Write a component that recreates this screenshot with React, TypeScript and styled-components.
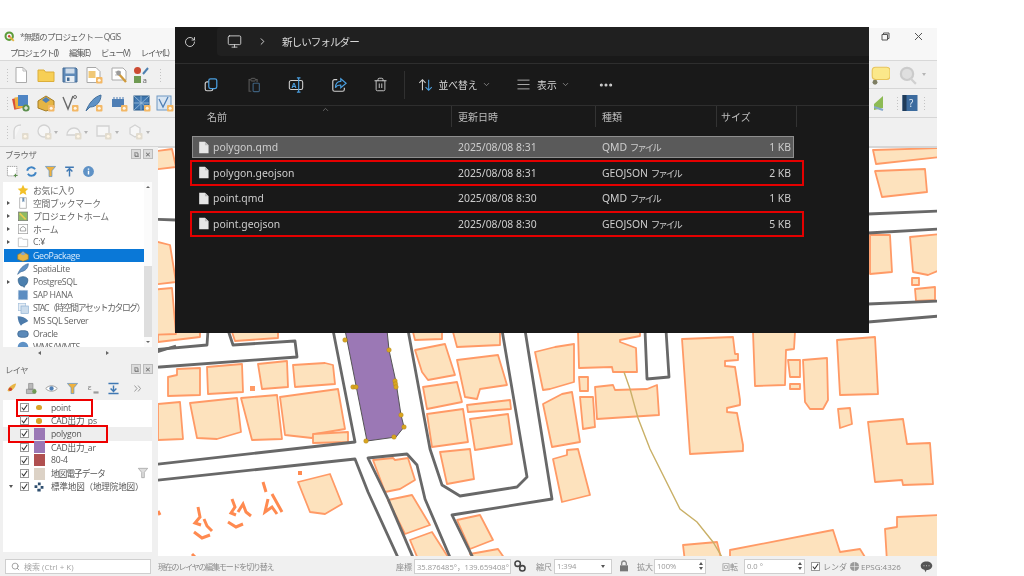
import React from 'react';
import styled, { createGlobalStyle } from 'styled-components';
import { AlignJustify, ChevronDown, ChevronRight, ChevronUp, Monitor, MoreHorizontal, RotateCw, Search, Trash2 } from 'lucide-react';

const UI_FONT = '"Open Sans", "Noto Sans CJK JP", sans-serif';
const FILE_FONT = '"Noto Sans", "Noto Sans CJK JP", sans-serif';

const GlobalStyle = createGlobalStyle`
    html, body {
        margin: 0;
        padding: 0;
        background: #ffffff;
    }
`;

const Page = styled.div`
    position: relative;
    width: 1024px;
    height: 576px;
    overflow: hidden;
    background: #ffffff;
    font-family: ${UI_FONT};
`;

const QgisWindow = styled.div`
    display: flex;
    flex-direction: column;
    width: 937px;
    height: 548px;
    margin-top: 28px;
    background: #f0f0f0;
    color: #555;
    filter: blur(0.5px);
`;

const TitleBar = styled.div`
    display: flex;
    align-items: center;
    height: 16px;
    padding: 0 14px 0 4px;
    flex-shrink: 0;
    background: #f7f7f7;
    font-size: 8.5px;
    color: #666;
`;

const TitleText = styled.span`
    margin-left: 5px;
    letter-spacing: -0.8px;
    white-space: nowrap;
`;

const WindowButtons = styled.div`
    display: flex;
    gap: 24px;
    margin-left: auto;
`;

const MenuBar = styled.div`
    display: flex;
    align-items: center;
    height: 16px;
    padding-left: 10px;
    flex-shrink: 0;
    gap: 11px;
    background: #f7f7f7;
    border-bottom: 1px solid #d8d8d8;
    font-size: 8.3px;
    letter-spacing: -1px;
    color: #555;
    white-space: nowrap;
`;

const ToolRow = styled.div<{ $h: number }>`
    display: flex;
    align-items: center;
    height: ${(p) => p.$h}px;
    flex-shrink: 0;
    box-sizing: border-box;
    padding-left: 6px;
    border-bottom: 1px solid #d6d6d6;
    background: #f0f0f0;
`;

const Grip = styled.span<{ $ml?: number }>`
    width: 3px;
    height: 14px;
    margin-left: ${(p) => p.$ml ?? 0}px;
    flex-shrink: 0;
    background-image: radial-gradient(#c4c4c4 0.7px, transparent 0.8px);
    background-size: 3px 3px;
`;

const Tool = styled.span<{ $w?: number }>`
    display: flex;
    align-items: center;
    justify-content: center;
    width: ${(p) => p.$w ?? 24.4}px;
    flex-shrink: 0;
`;

const Caret = styled.span<{ $color?: string }>`
    width: 0;
    height: 0;
    margin: 0 4px 0 -1px;
    flex-shrink: 0;
    border-left: 2.5px solid transparent;
    border-right: 2.5px solid transparent;
    border-top: 3px solid ${(p) => p.$color ?? '#b5b5b5'};
`;

const RightTools = styled.div`
    display: flex;
    align-items: center;
    margin-left: auto;
`;

const Main = styled.div`
    display: flex;
    flex: 1;
    min-height: 0;
`;

const SidePanel = styled.div`
    display: flex;
    flex-direction: column;
    width: 158px;
    flex-shrink: 0;
`;

const DockTitle = styled.div`
    display: flex;
    align-items: center;
    justify-content: space-between;
    height: 14px;
    padding: 0 5px 0 5px;
    flex-shrink: 0;
    font-size: 8.3px;
    letter-spacing: -0.5px;
    color: #666;
`;

const DockButtons = styled.div`
    display: flex;
    gap: 2px;
`;

const DockButton = styled.span`
    display: flex;
    align-items: center;
    justify-content: center;
    width: 8px;
    height: 8px;
    background: #dcdcdc;
    border: 1px solid #bbb;
    color: #666;
    font-size: 7px;
    line-height: 1;
`;

const DockTools = styled.div<{ $h: number }>`
    display: flex;
    align-items: center;
    gap: 2px;
    height: ${(p) => p.$h}px;
    padding-left: 4px;
    flex-shrink: 0;
`;

const TreeBox = styled.div<{ $h: number; $clip?: boolean }>`
    position: relative;
    height: ${(p) => p.$h}px;
    margin: 0 6px 0 3px;
    flex-shrink: 0;
    overflow: ${(p) => (p.$clip ? 'hidden' : 'visible')};
    background: #ffffff;
`;

const BrowserList = styled.div`
    padding: 1.5px 8px 0 1px;
`;

const BrowserRow = styled.div<{ $selected?: boolean; $tight?: boolean }>`
    display: flex;
    align-items: center;
    height: 13.1px;
    background: ${(p) => (p.$selected ? '#0a78d7' : 'transparent')};
    color: ${(p) => (p.$selected ? '#dcecfb' : '#666')};
    font-size: 8.8px;
    letter-spacing: ${(p) => (p.$tight ? '-1.4px' : '-0.35px')};
    white-space: nowrap;
    overflow: hidden;
`;

const Arrow = styled.span`
    width: 0;
    height: 0;
    margin-left: 3px;
    flex-shrink: 0;
    border-top: 2.5px solid transparent;
    border-bottom: 2.5px solid transparent;
    border-left: 3px solid #555;
`;

const ArrowSlot = styled.span`
    display: flex;
    width: 11px;
    flex-shrink: 0;
`;

const RowIcon = styled.span`
    display: flex;
    justify-content: center;
    width: 15px;
    margin-right: 3px;
    flex-shrink: 0;
`;

const VScroll = styled.div`
    position: absolute;
    top: 0;
    right: 0;
    bottom: 11px;
    width: 8px;
    display: flex;
    flex-direction: column;
    background: #fbfbfb;
    color: #777;
`;

const VThumb = styled.div`
    flex: 1;
    margin-top: 74px;
    background: #dedede;
`;

const ScrollArrow = styled.span<{ $dir: 'up' | 'down' | 'left' | 'right' }>`
    width: 0;
    height: 0;
    margin: 4px auto;
    flex-shrink: 0;
    border-style: solid;
    border-color: transparent;
    border-width: ${(p) => (p.$dir === 'up' || p.$dir === 'down' ? '2.5px 2.5px' : '2.5px 3px')};
    ${(p) => (p.$dir === 'up' ? 'border-bottom-color: #666; border-top-width: 0;' : '')}
    ${(p) => (p.$dir === 'down' ? 'border-top-color: #666; border-bottom-width: 0;' : '')}
    ${(p) => (p.$dir === 'left' ? 'border-right-color: #666; border-left-width: 0;' : '')}
    ${(p) => (p.$dir === 'right' ? 'border-left-color: #666; border-right-width: 0;' : '')}
`;

const HScroll = styled.div`
    position: absolute;
    left: 0;
    right: 0;
    bottom: 0;
    height: 11px;
    display: flex;
    align-items: center;
    justify-content: space-between;
    padding: 0 10px 0 2px;
    background: #f0f0f0;
`;

const DockGap = styled.div`
    height: 4px;
    flex-shrink: 0;
`;

const LayerList = styled.div`
    padding-top: 1px;
`;

const LayerRow = styled.div<{ $active?: boolean; $markLeft?: number; $markWidth?: number; $tight?: boolean }>`
    position: relative;
    display: flex;
    align-items: center;
    height: 13.2px;
    padding-left: 17px;
    background: ${(p) => (p.$active ? '#eeeeee' : 'transparent')};
    font-size: 8.6px;
    letter-spacing: ${(p) => (p.$tight ? '-0.9px' : '-0.2px')};
    color: #555;
    white-space: nowrap;
    ${(p) =>
        p.$markWidth
            ? `&::after {
        content: '';
        position: absolute;
        top: -2px;
        left: ${p.$markLeft}px;
        width: ${p.$markWidth}px;
        height: 18px;
        box-sizing: border-box;
        border: 2px solid #ee0000;
    }`
            : ''}
`;

const ExpandMark = styled.span`
    position: absolute;
    left: 6px;
    top: 5px;
    width: 0;
    height: 0;
    border-left: 2.5px solid transparent;
    border-right: 2.5px solid transparent;
    border-top: 3px solid #555;
`;

const CheckBox = styled.span`
    display: flex;
    align-items: center;
    justify-content: center;
    box-sizing: border-box;
    width: 9px;
    height: 9px;
    flex-shrink: 0;
    background: #ffffff;
    border: 1px solid #9a9a9a;
`;

const SymbolSlot = styled.span`
    display: flex;
    align-items: center;
    justify-content: center;
    width: 12px;
    height: 12px;
    margin: 0 6px 0 4px;
    flex-shrink: 0;
`;

const PointSymbol = styled.span`
    width: 5.5px;
    height: 5.5px;
    border-radius: 50%;
    background: #d8a42a;
`;

const FillSymbol = styled.span<{ $color: string }>`
    width: 11px;
    height: 12px;
    background: ${(p) => p.$color};
`;

const FilterBadge = styled.span`
    position: absolute;
    right: 3px;
    top: 0;
    display: flex;
`;

const MapCanvas = styled.div`
    flex: 1;
    min-width: 0;
    background: #ffffff;
    border-top: 1px solid #d6d6d6;
    overflow: hidden;
`;

const MapSvg = styled.svg`
    display: block;
    width: 779px;
    height: 409px;
    filter: blur(0.35px);
`;

const StatusBar = styled.div`
    display: flex;
    align-items: center;
    height: 20px;
    padding-left: 5px;
    flex-shrink: 0;
    background: #f0f0f0;
    font-size: 8px;
    color: #8a8a8a;
    white-space: nowrap;
`;

const SearchBox = styled.div`
    display: flex;
    align-items: center;
    gap: 4px;
    box-sizing: border-box;
    width: 146px;
    height: 15px;
    padding-left: 5px;
    background: #ffffff;
    border: 1px solid #cfcfcf;
    color: #a5a5a5;
`;

const StatusText = styled.span<{ $ml?: number; $w?: number; $tight?: boolean }>`
    display: flex;
    align-items: center;
    flex-shrink: 0;
    margin-left: ${(p) => p.$ml ?? 0}px;
    ${(p) => (p.$w ? `width: ${p.$w}px;` : '')}
    ${(p) => (p.$tight ? 'letter-spacing: -1.2px;' : '')}
`;

const StatusInput = styled.span<{ $w: number; $ml: number }>`
    display: flex;
    align-items: center;
    justify-content: space-between;
    box-sizing: border-box;
    width: ${(p) => p.$w}px;
    height: 15px;
    margin-left: ${(p) => p.$ml}px;
    padding: 0 2px;
    flex-shrink: 0;
    background: #ffffff;
    border: 1px solid #cfcfcf;
    font-size: 7.6px;
    color: #999;
`;

const SpinButtons = styled.span`
    display: flex;
    flex-direction: column;
    gap: 1.5px;
`;

const SpinUp = styled.span`
    width: 0;
    height: 0;
    border-left: 2.5px solid transparent;
    border-right: 2.5px solid transparent;
    border-bottom: 3px solid #555;
`;

const SpinDown = styled(SpinUp)`
    border-bottom: 0;
    border-top: 3px solid #555;
`;

const Explorer = styled.div`
    position: absolute;
    left: 175px;
    top: 27px;
    display: flex;
    flex-direction: column;
    width: 694px;
    height: 306px;
    background: #191919;
    color: #d0d0d0;
    font-family: ${FILE_FONT};
    filter: blur(0.35px);
`;

const AddressBar = styled.div`
    display: flex;
    align-items: stretch;
    height: 36px;
    flex-shrink: 0;
    border-bottom: 1px solid #2e2e2e;
`;

const RefreshSlot = styled.div`
    display: flex;
    align-items: center;
    justify-content: center;
    width: 30px;
    margin-right: 12px;
    padding-bottom: 6px;
    color: #d8d8d8;
`;

const PathField = styled.div`
    display: flex;
    align-items: center;
    flex: 1;
    height: 29px;
    padding-left: 10px;
    background: #202020;
    border-radius: 4px 0 0 4px;
    font-size: 10.6px;
    letter-spacing: -1px;
    color: #d8d8d8;
`;

const PathChevron = styled.span`
    display: flex;
    margin: 0 14px 0 15px;
    color: #dddddd;
`;

const CommandBar = styled.div`
    display: flex;
    align-items: center;
    height: 41px;
    flex-shrink: 0;
    padding-left: 15px;
    border-bottom: 1px solid #2e2e2e;
`;

const CommandButton = styled.span<{ $w?: number }>`
    display: flex;
    align-items: center;
    justify-content: center;
    width: ${(p) => p.$w ?? 42.6}px;
    flex-shrink: 0;
    color: #d6d6d6;
`;

const CommandDivider = styled.span`
    width: 1px;
    height: 28px;
    margin: 0 13px 0 3px;
    background: #303030;
`;

const CommandLabel = styled.span<{ $mr?: number }>`
    display: flex;
    align-items: center;
    gap: 4px;
    margin-right: ${(p) => p.$mr ?? 0}px;
    font-size: 9.8px;
    color: #d8d8d8;
    white-space: nowrap;
`;

const HeaderRow = styled.div`
    position: relative;
    display: grid;
    grid-template-columns: 277px 144px 121px 80px;
    height: 25px;
    flex-shrink: 0;
    font-size: 10px;
    color: #bdbdbd;
`;

const HeaderCell = styled.div<{ $pad: number }>`
    display: flex;
    align-items: center;
    height: 21px;
    padding-left: ${(p) => p.$pad}px;
    border-right: 1px solid #333;
`;

const SortMark = styled.span`
    position: absolute;
    left: 146px;
    top: -1px;
    display: flex;
    color: #777;
`;

const FileList = styled.div`
    display: flex;
    flex-direction: column;
    padding: 5px 0 0 17px;
`;

const FileRow = styled.div<{ $selected?: boolean; $marked?: boolean }>`
    position: relative;
    display: grid;
    grid-template-columns: 16px 245px 144px 115px 74px;
    align-items: center;
    box-sizing: border-box;
    width: 602px;
    height: 22px;
    margin-bottom: 3.5px;
    padding-left: 5px;
    background: ${(p) => (p.$selected ? '#5a5a5a' : 'transparent')};
    ${(p) => (p.$selected ? 'outline: 1px solid #8e8e8e; outline-offset: -1px;' : '')}
    font-size: 10.4px;
    color: #cdcdcd;
    ${(p) =>
        p.$marked
            ? `&::after {
        content: '';
        position: absolute;
        left: -2px;
        right: -10px;
        top: -2px;
        bottom: -2px;
        border: 2px solid #e40000;
    }`
            : ''}
`;

const SizeCell = styled.span`
    text-align: right;
`;

const KanaPart = styled.span`
    font-size: 9.5px;
    letter-spacing: -2px;
`;

const Svg = styled.svg.attrs({ viewBox: '0 0 18 18', fill: 'none' })<{ $s?: number }>`
    display: block;
    flex-shrink: 0;
    width: ${(p) => p.$s ?? 18}px;
    height: ${(p) => p.$s ?? 18}px;
`;

const Badge = ({ x = 11, y = 11, pale }: { x?: number; y?: number; pale?: boolean }) => (
    <g>
        <rect x={x} y={y} width="6.5" height="6.5" rx="1" fill={pale ? '#e2dccf' : '#f3b866'} />
        <circle cx={x + 3.2} cy={y + 3.2} r="1.5" fill="#fff6e6" />
    </g>
);

const NewFile = () => (
    <Svg><path d="M4 1.5h7l3.5 3.5v11.5H4z" fill="#fff" stroke="#aaa" /><path d="M11 1.5V5h3.5" stroke="#bbb" /></Svg>
);
const OpenFolder = () => (
    <Svg><path d="M1 4h6l1.5 2H17v9.5H1z" fill="#f7cf55" stroke="#dcae3a" /></Svg>
);
const SaveDisk = () => (
    <Svg><path d="M2 2h13l1 1v13H2z" fill="#5f8ab8" stroke="#446b94" /><rect x="4.5" y="2.5" width="9" height="5" fill="#cfdcea" /><rect x="4.5" y="10" width="9" height="6" fill="#e8eef4" /><rect x="6" y="11.5" width="2.5" height="3.5" fill="#446b94" /></Svg>
);
const ProjectDoc = () => (
    <Svg><path d="M2 1.5h9l4 4v11H2z" fill="#fff" stroke="#a8a8a8" /><rect x="3.5" y="5" width="7" height="7" fill="#f0c877" /><Badge /></Svg>
);
const WrenchDoc = () => (
    <Svg><path d="M2 2h11l3 3v9H2z" fill="#fff" stroke="#aaa" /><path d="M5 6h6M5 9h4" stroke="#bbb" /><path d="M8 7l8 9" stroke="#d09b3c" strokeWidth="2.4" /><circle cx="8.5" cy="7" r="2.4" fill="#9a9a9a" /></Svg>
);
const DataManager = () => (
    <Svg><circle cx="5.5" cy="4.5" r="3.5" fill="#cc4a32" /><rect x="2" y="10" width="7" height="7" fill="#6f9a52" /><path d="M11 8l5-6" stroke="#4d7fb0" strokeWidth="2" /><text x="10.5" y="16.5" fontSize="8" fontFamily="Open Sans" fill="#666">a</text></Svg>
);
const LayerAdd = () => (
    <Svg><rect x="1" y="4" width="9" height="11" fill="#d94f38" transform="rotate(-12 5 9)" /><rect x="3" y="3" width="10" height="11" fill="#eeb13f" transform="rotate(-6 8 8)" /><rect x="6" y="1" width="10" height="11" fill="#4f85c4" /><circle cx="14" cy="14" r="3.6" fill="#5d8f4e" /><path d="M14 12v4M12 14h4" stroke="#fff" /></Svg>
);
const BoxLayer = () => (
    <Svg><path d="M1 7l8-5 8 5v7l-8 3-8-3z" fill="#e5b545" stroke="#a47d25" /><path d="M5 6l4-3 4 3-4 3z" fill="#4f7fb5" /><Badge /></Svg>
);
const VectorLayer = () => (
    <Svg><path d="M2 3l5 12 5-13" stroke="#6a6a6a" strokeWidth="1.4" /><circle cx="14" cy="3" r="1.5" stroke="#6a6a6a" /><Badge /></Svg>
);
const Feather = () => (
    <Svg><path d="M1 17C4 9 9 3 16 1c0 6-4 12-11 12z" fill="#5f92c6" stroke="#44709c" /><Badge /></Svg>
);
const ChipLayer = () => (
    <Svg><rect x="2" y="5" width="12" height="8" fill="#4f7fb5" /><path d="M4 3v2M7 3v2M10 3v2M13 3v2" stroke="#4f7fb5" /><Badge /></Svg>
);
const MeshLayer = () => (
    <Svg><rect x="1" y="2" width="15" height="14" fill="#3f76ae" stroke="#2a5a88" /><path d="M1 2l15 14M16 2L1 16M8 2v14M1 9h15" stroke="#9fc0dd" strokeWidth=".8" /><Badge /></Svg>
);
const WmsLayer = () => (
    <Svg><rect x="1" y="2" width="14" height="14" fill="#d8e5f2" stroke="#6f98c2" /><path d="M3 5l4 8 5-10" stroke="#4f7fb5" strokeWidth="1.3" /><Badge /></Svg>
);
const GreyShape = ({ d }: { d: string }) => (
    <Svg><path d={d} stroke="#d2d2d2" strokeWidth="1.3" fill="#f6f6f6" /><Badge x={10} y={10} pale /></Svg>
);
const Bubble = () => (
    <Svg $s={20}><rect x="2" y="2" width="16" height="11" rx="3" fill="#fbe88a" stroke="#e8c45a" /><circle cx="4.5" cy="15.5" r="2.2" fill="#7d7d62" /></Svg>
);
const GreyGear = () => (
    <Svg $s={20}><circle cx="9" cy="8" r="5.5" fill="#dfdfdf" stroke="#cbcbcb" strokeWidth="2" /><path d="M12 12l5 5" stroke="#d0d0d0" strokeWidth="2" /></Svg>
);
const GreenStack = () => (
    <Svg><path d="M0 10l9-8v12l-9 2z" fill="#8dbb55" /><path d="M0 13l9 3" stroke="#86a8cc" strokeWidth="2" /></Svg>
);
const HelpBook = () => (
    <Svg><rect x="1.5" y="1" width="15" height="16" fill="#3c6b9e" /><rect x="1.5" y="1" width="4" height="16" fill="#1f3b59" /><text x="8" y="13" fontSize="10" fontFamily="Open Sans" fill="#e8f0f8">?</text></Svg>
);

const RestoreGlyph = () => (
    <Svg $s={9}><path d="M2 5h11v11H2z" stroke="#555" strokeWidth="2" /><path d="M5 5V2h11v11h-3" stroke="#555" strokeWidth="2" /></Svg>
);
const CloseGlyph = () => (
    <Svg $s={9}><path d="M2 2l14 14M16 2L2 16" stroke="#555" strokeWidth="2" /></Svg>
);
const QgisLogo = () => (
    <Svg $s={11}><circle cx="8.5" cy="8.5" r="6" stroke="#5d9c3a" strokeWidth="3.4" /><path d="M10 10l6 6" stroke="#e2b23c" strokeWidth="3" /><circle cx="8.5" cy="8.5" r="2" fill="#c94a35" /></Svg>
);

const Small = ({ children }: { children: React.ReactNode }) => (
    <Svg $s={12}>{children}</Svg>
);

const browserIcons: Record<string, React.ReactNode> = {
    star: <Small><path d="M9 1l2.4 5.4 5.6.6-4.2 3.8 1.2 5.7L9 13.6 4 16.5l1.2-5.7L1 7l5.6-.6z" fill="#f2c029" /></Small>,
    bookmark: <Small><path d="M4 1h10v16H4z" fill="#fff" stroke="#999" /><path d="M8 1v7l1.5-1.5L11 8V1" fill="#6b8fb3" /></Small>,
    home: <Small><rect x="2" y="3" width="14" height="13" fill="#8fbb63" stroke="#777" /><path d="M4 5l9 9" stroke="#e7cb53" strokeWidth="2.5" /></Small>,
    house: <Small><rect x="2" y="2" width="14" height="14" fill="#fff" stroke="#999" /><path d="M5 12V8l4-3 4 3v4z" stroke="#777" /></Small>,
    drive: <Small><path d="M2 3h5l2 2h7v11H2z" fill="#fff" stroke="#aaa" /></Small>,
    geopackage: <Small><path d="M1 7l8-4 8 4v7l-8 3-8-3z" fill="#e8b544" stroke="#9b7826" /><path d="M5 6l4-4 4 4-4 2z" fill="#7fa6cf" /></Small>,
    spatialite: <Small><path d="M1 17C4 9 9 3 17 1c0 6-4 11-11 12z" fill="#5f92c6" stroke="#44709c" /></Small>,
    postgres: <Small><path d="M2 4c3-4 11-4 14 0 1 4-1 9-4 10l-1 3-3-2c-4 0-7-6-6-11z" fill="#4b7fae" stroke="#2d5a82" /></Small>,
    hana: <Small><rect x="2" y="2" width="14" height="14" fill="#5c8dc1" stroke="#b8cce0" strokeDasharray="1 1" /></Small>,
    stac: <Small><rect x="2" y="2" width="11" height="11" fill="#e5edf5" stroke="#a5c1dc" /><rect x="6" y="6" width="11" height="11" fill="#cbdcec" stroke="#8cb0d2" /></Small>,
    mssql: <Small><path d="M1 2c6 0 12 2 16 7-4 3-9 4-11 7-3-3-5-9-5-14z" fill="#4c7bab" /></Small>,
    oracle: <Small><rect x="1" y="4" width="16" height="10" rx="5" fill="#5b89b8" stroke="#2f5c8a" /></Small>,
    wms: <Small><circle cx="9" cy="9" r="8" fill="#5f92c6" /></Small>,
};

const browserRows = [
    { label: 'お気に入り', icon: 'star' },
    { label: '空間ブックマーク', icon: 'bookmark', arrow: true },
    { label: 'プロジェクトホーム', icon: 'home', arrow: true },
    { label: 'ホーム', icon: 'house', arrow: true },
    { label: 'C:¥', icon: 'drive', arrow: true },
    { label: 'GeoPackage', icon: 'geopackage', selected: true },
    { label: 'SpatiaLite', icon: 'spatialite' },
    { label: 'PostgreSQL', icon: 'postgres', arrow: true },
    { label: 'SAP HANA', icon: 'hana' },
    { label: 'STAC（時空間アセットカタログ）', icon: 'stac', tight: true },
    { label: 'MS SQL Server', icon: 'mssql' },
    { label: 'Oracle', icon: 'oracle' },
    { label: 'WMS/WMTS', icon: 'wms' },
];

const layers = [
    { label: 'point', kind: 'point', markLeft: 13, markWidth: 77 },
    { label: 'CAD出力_ps', kind: 'point' },
    { label: 'polygon', color: '#9b78b5', active: true, markLeft: 5, markWidth: 100 },
    { label: 'CAD出力_ar', color: '#9b78b5' },
    { label: '80-4', color: '#b05050' },
    { label: '地図電子データ', color: '#dcd2c6', filter: true, tight: true },
    { label: '標準地図（地理院地図）', kind: 'raster', expand: true },
];

const files = [
    { name: 'polygon.qmd', kind: 'QMD', date: '2025/08/08 8:31', size: '1 KB', selected: true },
    { name: 'polygon.geojson', kind: 'GEOJSON', date: '2025/08/08 8:31', size: '2 KB', marked: true },
    { name: 'point.qmd', kind: 'QMD', date: '2025/08/08 8:30', size: '1 KB' },
    { name: 'point.geojson', kind: 'GEOJSON', date: '2025/08/08 8:30', size: '5 KB', marked: true },
];

// screen coordinates, the map's viewBox starts at the canvas corner
const buildings = [
    '168,375 177,373 177,367 200,366 200,393 168,394',
    '207,365 242,362 243,390 208,392',
    '258,362 287,359 288,385 262,387',
    '293,363 325,361 333,363 335,382 295,385',
    '158,402 180,400 183,437 158,438',
    '190,401 237,396 241,430 217,437 197,436',
    '241,396 277,393 282,437 252,438',
    '280,395 338,387 345,427 315,432 312,436 285,433',
    '313,432 348,430 348,440 313,441',
    '298,480 330,472 342,502 325,512 310,510',
    '373,458 393,456 395,458 408,456 415,478 400,487 385,490',
    '388,498 412,493 430,523 405,532',
    '410,538 432,530 448,555 418,557',
    '457,518 480,513 493,538 470,547',
    '470,552 498,547 505,557 474,557',
    '415,348 445,342 455,373 428,378 422,370',
    '457,358 498,353 507,383 480,387 477,397 465,395',
    '423,385 457,380 462,400 427,407',
    '427,412 463,407 468,440 432,445',
    '470,417 508,412 512,442 475,448',
    '467,403 510,398 511,407 468,410',
    '440,450 470,447 474,477 447,482',
    '453,330 500,330 500,343 457,345',
    '535,350 555,345 574,342 574,380 550,387 543,388',
    '543,402 562,392 572,390 580,440 552,445',
    '553,457 567,453 567,448 578,447 590,493 562,500',
    '413,330 442,330 442,337 415,338',
    '158,330 200,330 200,335 158,340',
    '232,330 278,330 278,336 235,339',
    '578,330 640,330 640,334 620,338 620,340 636,346 637,370 613,370 612,365 579,366',
    '595,385 613,383 615,388 647,387 657,383 659,413 597,417',
    '580,395 593,395 595,425 583,427',
    '579,375 588,375 588,389 580,389',
    '682,337 733,335 735,352 738,352 738,358 725,359 725,364 735,365 740,398 740,403 727,406 727,410 737,411 743,443 743,449 690,452',
    '753,330 795,330 794,347 786,348 785,383 755,384',
    '788,358 800,358 800,375 790,375',
    '790,382 800,382 800,387 790,387',
    '803,358 827,356 828,398 823,407 810,407 805,400',
    '837,338 875,335 878,392 840,393',
    '838,407 850,406 852,422 840,426',
    '868,420 903,417 907,442 930,441 933,482 903,483 902,478 875,480',
    '885,527 897,525 897,515 940,513 940,560 887,560',
    '730,548 833,528 840,550 860,547 868,560 730,560',
    '683,543 717,540 722,560 685,560',
    '873,148 940,146 940,155 876,162',
    '875,169 925,167 927,190 882,195',
    '870,233 890,233 892,270 870,272',
    '910,235 940,232 940,268 928,273 913,270',
    '912,276 919,276 919,283 912,283',
    '915,287 935,285 935,298 916,299',
    '150,150 172,147 176,165 150,168',
    '150,238 170,243 176,280 150,283',
    '150,288 172,286 176,332 150,333',
];

const roads = [
    '150,348 207,343 208,328',
    '228,328 233,343 295,339 297,355 160,365 150,366',
    '333,328 355,440 150,463',
    '150,479 355,457 368,490 400,560',
    '388,497 368,456 407,452 417,463 425,497 452,560',
    '388,497 415,560',
    '408,328 430,447 442,483 460,494 517,485 527,475 502,328',
    '525,328 552,497 452,513 475,560',
    '645,328 647,377 669,375 666,328',
    '868,212 940,209',
    '868,231 940,227',
    '868,302 940,299',
    '868,320 940,314',
    '150,217 176,218',
    '150,352 176,344',
];

const marks = [
    'M263 480l3 10M268 497l-3 13 7-5 5 7M272 492l10 18',
    'M232 497l3 8-4 6 5 2M238 510l5-8 3 8 5 4M228 520l8 5 7-3',
    'M198 505l2 10-5 6 6 2M204 517l3 7 5 5M194 530l8 6 8-3',
    'M158 509l2 4',
    'M192 552l3 3',
];

const polygonShape = '345,328 387,328 389,348 396,380 401,413 404,425 396,435 367,439';
const vertexPoints = [
    [345, 338], [389, 348], [395, 379], [395.5, 382], [396, 385], [353, 385], [356, 385], [401, 413], [404, 425], [394, 435], [366, 439],
];

const LotMap = () => (
    <MapSvg viewBox="158 146 779 409">
        <g fill="#fde2bd" stroke="#ff9a66" strokeWidth="1.8" strokeLinejoin="round">
            {buildings.map((points) => <polygon key={points} points={points} />)}
        </g>
        <g fill="none" stroke="#686868" strokeWidth="2.8" strokeLinejoin="round">
            {roads.map((points) => <polyline key={points} points={points} />)}
        </g>
        <g fill="none" stroke="#ff8a50" strokeWidth="3">
            {marks.map((d) => <path key={d} d={d} />)}
        </g>
        <polyline points="624,370 630,387 638,416 650,447 680,507 697,520 713,540 722,555" fill="none" stroke="#c9b067" strokeWidth="1.4" />
        <rect x="250" y="384" width="5" height="5" fill="#ff9a66" />
        <rect x="298" y="469" width="4" height="4" fill="#ff8a50" />
        <polygon points={polygonShape} fill="#9b78b5" stroke="#555" strokeWidth="1" />
        <g fill="#d9a520" stroke="#a8801a" strokeWidth=".4">
            {vertexPoints.map(([x, y]) => <circle key={`${x}-${y}`} cx={x} cy={y} r="2.3" />)}
        </g>
    </MapSvg>
);

const CheckMark = () => (
    <Svg $s={7}><path d="M2 9l5 6 9-13" stroke="#333" strokeWidth="2.6" /></Svg>
);

const Explorer16 = ({ children }: { children: React.ReactNode }) => (
    <Svg $s={16}>{children}</Svg>
);

const App = () => {
    return (
        <Page>
            <GlobalStyle />
            <QgisWindow>
                <TitleBar>
                    <QgisLogo />
                    <TitleText>*無題のプロジェクト — QGIS</TitleText>
                    <WindowButtons>
                        <RestoreGlyph />
                        <CloseGlyph />
                    </WindowButtons>
                </TitleBar>
                <MenuBar>
                    <span>プロジェクト(J)</span>
                    <span>編集(E)</span>
                    <span>ビュー(V)</span>
                    <span>レイヤ(L)</span>
                </MenuBar>
                <ToolRow $h={28}>
                    <Grip />
                    <Tool><NewFile /></Tool>
                    <Tool><OpenFolder /></Tool>
                    <Tool><SaveDisk /></Tool>
                    <Tool><ProjectDoc /></Tool>
                    <Tool><WrenchDoc /></Tool>
                    <Tool $w={20}><DataManager /></Tool>
                    <Grip $ml={8} />
                    <RightTools>
                        <Tool $w={20}><Bubble /></Tool>
                        <Tool $w={33}><GreyGear /></Tool>
                        <Caret />
                        <Tool $w={7} />
                    </RightTools>
                </ToolRow>
                <ToolRow $h={29}>
                    <Grip />
                    <Tool><LayerAdd /></Tool>
                    <Tool><BoxLayer /></Tool>
                    <Tool><VectorLayer /></Tool>
                    <Tool><Feather /></Tool>
                    <Tool><ChipLayer /></Tool>
                    <Tool $w={22}><MeshLayer /></Tool>
                    <Tool><WmsLayer /></Tool>
                    <RightTools>
                        <Tool $w={18}><GreenStack /></Tool>
                        <Grip $ml={4} />
                        <Tool $w={22}><HelpBook /></Tool>
                        <Grip $ml={2} />
                        <Tool $w={11} />
                    </RightTools>
                </ToolRow>
                <ToolRow $h={29}>
                    <Grip />
                    <Tool><GreyShape d="M2 16V8c0-4 3-6 7-6" /></Tool>
                    <Tool $w={22}><GreyShape d="M3 8a6 6 0 1 1 12 0 6 6 0 1 1-12 0z" /></Tool>
                    <Caret />
                    <Tool $w={23}><GreyShape d="M2 12c0-4 3-7 7-7s6 3 6 7z" /></Tool>
                    <Caret />
                    <Tool $w={24}><GreyShape d="M2 3h12v10H2z" /></Tool>
                    <Caret />
                    <Tool $w={24}><GreyShape d="M4 5l5-3 5 3v6l-5 3-5-3z" /></Tool>
                    <Caret />
                </ToolRow>
                <Main>
                    <SidePanel>
                        <DockTitle>
                            <span>ブラウザ</span>
                            <DockButtons>
                                <DockButton>⧉</DockButton>
                                <DockButton>✕</DockButton>
                            </DockButtons>
                        </DockTitle>
                        <DockTools $h={21}>
                            <Tool $w={17}>
                                <Svg $s={13}><rect x="2" y="2" width="13" height="13" fill="#fff" stroke="#888" strokeDasharray="2 1" /><path d="M13 12v5M11 14.5h5" stroke="#5d8f4e" strokeWidth="1.6" /></Svg>
                            </Tool>
                            <Tool $w={17}>
                                <Svg $s={13}><path d="M3 8a6 6 0 0 1 11-2M15 10a6 6 0 0 1-11 2" stroke="#3f84c4" strokeWidth="2.6" /></Svg>
                            </Tool>
                            <Tool $w={17}>
                                <Svg $s={13}><path d="M2 2h14l-5 6v8H7V8z" fill="#eeb13f" stroke="#5f92c6" /></Svg>
                            </Tool>
                            <Tool $w={17}>
                                <Svg $s={13}><path d="M3 3h12M9 16V6M5 9l4-4 4 4" stroke="#3f78b3" strokeWidth="2" /></Svg>
                            </Tool>
                            <Tool $w={17}>
                                <Svg $s={13}><circle cx="9" cy="9" r="7.5" fill="#5f92c6" /><path d="M9 8v5M9 5v1.6" stroke="#fff" strokeWidth="2" /></Svg>
                            </Tool>
                        </DockTools>
                        <TreeBox $h={176} $clip>
                            <BrowserList>
                                {browserRows.map((row) => (
                                    <BrowserRow key={row.label} $selected={row.selected} $tight={row.tight}>
                                        <ArrowSlot>{row.arrow && <Arrow />}</ArrowSlot>
                                        <RowIcon>{browserIcons[row.icon]}</RowIcon>
                                        {row.label}
                                    </BrowserRow>
                                ))}
                            </BrowserList>
                            <VScroll>
                                <ScrollArrow $dir="up" />
                                <VThumb />
                                <ScrollArrow $dir="down" />
                            </VScroll>
                            <HScroll>
                                <ScrollArrow $dir="left" />
                                <ScrollArrow $dir="right" />
                            </HScroll>
                        </TreeBox>
                        <DockGap />
                        <DockTitle>
                            <span>レイヤ</span>
                            <DockButtons>
                                <DockButton>⧉</DockButton>
                                <DockButton>✕</DockButton>
                            </DockButtons>
                        </DockTitle>
                        <DockTools $h={24}>
                            <Tool $w={16}>
                                <Svg $s={13}><path d="M2 12c2-6 7-9 12-10-1 6-5 10-10 11z" fill="#e8b544" /><circle cx="6" cy="10" r="2.4" fill="#cc4a32" /></Svg>
                            </Tool>
                            <Tool $w={18}>
                                <Svg $s={13}><path d="M5 2h6v8H5zM2 10h12v6H2z" fill="#b9b9b9" stroke="#8c8c8c" /><circle cx="13" cy="13" r="3" fill="#6f9a52" /></Svg>
                            </Tool>
                            <Tool $w={19}>
                                <Svg $s={13}><path d="M1 9c4-5 12-5 16 0-4 5-12 5-16 0z" fill="#fff" stroke="#7d7d7d" /><circle cx="9" cy="9" r="3" fill="#4f7fb5" /></Svg>
                            </Tool>
                            <Tool $w={19}>
                                <Svg $s={13}><path d="M2 2h14l-5 6v8H7V8z" fill="#eeb13f" stroke="#5f92c6" /></Svg>
                            </Tool>
                            <Tool $w={19}>
                                <Svg $s={13}><text x="1" y="11" fontSize="11" fontFamily="Open Sans" fill="#777">ε</text><path d="M9 13h7v3H9z" fill="#9a9a9a" /></Svg>
                            </Tool>
                            <Tool $w={17}>
                                <Svg $s={13}><path d="M2 2h14M9 5v8M5 9l4 4 4-4M2 16h14" stroke="#3f78b3" strokeWidth="2" /></Svg>
                            </Tool>
                            <Tool $w={26}>
                                <Svg $s={9}><path d="M3 3l5 6-5 6M10 3l5 6-5 6" stroke="#888" strokeWidth="1.6" /></Svg>
                            </Tool>
                        </DockTools>
                        <TreeBox $h={152}>
                            <LayerList>
                                {layers.map((layer) => (
                                    <LayerRow
                                        key={layer.label}
                                        $active={layer.active}
                                        $markLeft={layer.markLeft}
                                        $markWidth={layer.markWidth}
                                        $tight={layer.tight}
                                    >
                                        {layer.expand && <ExpandMark />}
                                        <CheckBox><CheckMark /></CheckBox>
                                        <SymbolSlot>
                                            {layer.kind === 'point' && <PointSymbol />}
                                            {layer.color && <FillSymbol $color={layer.color} />}
                                            {layer.kind === 'raster' && (
                                                <Svg $s={10}><path d="M1 6h5v5H1zM7 1h5v5H7zM12 7h5v5h-5zM6 12h6v5H6z" fill="#2f4f6f" /></Svg>
                                            )}
                                        </SymbolSlot>
                                        {layer.label}
                                        {layer.filter && (
                                            <FilterBadge>
                                                <Svg $s={12}><path d="M2 2h14l-5 6v8H7V8z" fill="#ddd" stroke="#999" /></Svg>
                                            </FilterBadge>
                                        )}
                                    </LayerRow>
                                ))}
                            </LayerList>
                        </TreeBox>
                    </SidePanel>
                    <MapCanvas>
                        <LotMap />
                    </MapCanvas>
                </Main>
                <StatusBar>
                    <SearchBox>
                        <Search size={9} color="#888" />
                        検索 (Ctrl + K)
                    </SearchBox>
                    <StatusText $ml={7} $w={238} $tight>現在のレイヤの編集モードを切り替え</StatusText>
                    <StatusText $w={18}>座標</StatusText>
                    <StatusInput $w={97} $ml={0}>35.876485°，139.659408°</StatusInput>
                    <StatusText $ml={2} $w={23}>
                        <Svg $s={14}><circle cx="6" cy="6" r="3.5" stroke="#444" strokeWidth="2" /><circle cx="12" cy="12" r="3.5" stroke="#444" strokeWidth="2" /></Svg>
                    </StatusText>
                    <StatusText $w={18}>縮尺</StatusText>
                    <StatusInput $w={58} $ml={0}>
                        1:394
                        <Caret $color="#555" />
                    </StatusInput>
                    <StatusText $ml={6} $w={19}>
                        <Svg $s={12}><rect x="3" y="8" width="12" height="9" fill="#777" /><path d="M5.5 8V5a3.5 3.5 0 0 1 7 0v3" stroke="#888" strokeWidth="2" /></Svg>
                    </StatusText>
                    <StatusText $w={17}>拡大</StatusText>
                    <StatusInput $w={52} $ml={0}>
                        100%
                        <SpinButtons><SpinUp /><SpinDown /></SpinButtons>
                    </StatusInput>
                    <StatusText $ml={16} $w={22}>回転</StatusText>
                    <StatusInput $w={61} $ml={0}>
                        0.0 °
                        <SpinButtons><SpinUp /><SpinDown /></SpinButtons>
                    </StatusInput>
                    <StatusText $ml={6} $w={12}><CheckBox><CheckMark /></CheckBox></StatusText>
                    <StatusText $w={24}>レンダ</StatusText>
                    <StatusText $ml={2} $w={12}>
                        <Svg $s={11}><circle cx="9" cy="9" r="7.5" fill="#9a9a9a" /><path d="M1.5 9h15M9 1.5v15" stroke="#e8e8e8" /></Svg>
                    </StatusText>
                    <StatusText $w={52}>EPSG:4326</StatusText>
                    <StatusText $ml={7}>
                        <Svg $s={13}><path d="M9 2c5 0 8 3 8 6s-3 6-8 6l-1 3-2-3.4C3 13 1 11 1 8c0-3 3-6 8-6z" fill="#555" /><path d="M5 8h1M8.5 8h1M12 8h1" stroke="#eee" strokeWidth="1.6" /></Svg>
                    </StatusText>
                </StatusBar>
            </QgisWindow>
            <Explorer>
                <AddressBar>
                    <RefreshSlot><RotateCw size={12} strokeWidth={1.8} /></RefreshSlot>
                    <PathField>
                        <Monitor size={15} strokeWidth={1.4} />
                        <PathChevron><ChevronRight size={11} strokeWidth={2} /></PathChevron>
                        新しいフォルダー
                    </PathField>
                </AddressBar>
                <CommandBar>
                    <CommandButton>
                        <Explorer16>
                            <rect x="6.5" y="2" width="9" height="11" rx="2" stroke="#4a9fe0" strokeWidth="1.4" />
                            <path d="M6 5.5H4.5a2 2 0 0 0-2 2v6a2 2 0 0 0 2 2H9a2 2 0 0 0 2-2" stroke="#cfcfcf" strokeWidth="1.3" />
                        </Explorer16>
                    </CommandButton>
                    <CommandButton>
                        <Explorer16>
                            <path d="M5 3H3.5v13H6" stroke="#555" strokeWidth="1.3" />
                            <path d="M11 3h1.5v3" stroke="#555" strokeWidth="1.3" />
                            <rect x="5.5" y="1.5" width="5" height="3" rx="1" stroke="#666" />
                            <rect x="8" y="7" width="7" height="9.5" rx="1" stroke="#3d5f7c" strokeWidth="1.3" />
                        </Explorer16>
                    </CommandButton>
                    <CommandButton>
                        <Explorer16>
                            <rect x="1.5" y="4" width="15" height="10" rx="2" stroke="#cfcfcf" strokeWidth="1.2" />
                            <text x="4" y="12" fontSize="8" fontFamily="Noto Sans" fontWeight="700" fill="#4a9fe0">A</text>
                            <path d="M12 1v16M10 1h4M10 17h4" stroke="#4a9fe0" strokeWidth="1.3" />
                        </Explorer16>
                    </CommandButton>
                    <CommandButton>
                        <Explorer16>
                            <path d="M7 3H4a2 2 0 0 0-2 2v9a2 2 0 0 0 2 2h9a2 2 0 0 0 2-2v-2" stroke="#cfcfcf" strokeWidth="1.3" />
                            <path d="M11 2l6 5-6 5V9c-3 0-5 1-6 3 0-4 2-7 6-7z" stroke="#4a9fe0" strokeWidth="1.3" />
                        </Explorer16>
                    </CommandButton>
                    <CommandButton $w={41}><Trash2 size={15} strokeWidth={1.4} /></CommandButton>
                    <CommandDivider />
                    <CommandLabel $mr={25}>
                        <Explorer16>
                            <path d="M5 15V3M1.5 6.5L5 3l3.5 3.5" stroke="#cfcfcf" strokeWidth="1.2" />
                            <path d="M12 3v12M8.5 11.5L12 15l3.5-3.5" stroke="#4a9fe0" strokeWidth="1.2" />
                        </Explorer16>
                        並べ替え
                        <ChevronDown size={9} color="#999" />
                    </CommandLabel>
                    <CommandLabel $mr={28}>
                        <AlignJustify size={15} strokeWidth={1.2} />
                        <span>&nbsp;表示</span>
                        <ChevronDown size={9} color="#999" />
                    </CommandLabel>
                    <MoreHorizontal size={16} strokeWidth={2.6} />
                </CommandBar>
                <HeaderRow>
                    <HeaderCell $pad={32}>名前</HeaderCell>
                    <SortMark><ChevronUp size={9} /></SortMark>
                    <HeaderCell $pad={6}>更新日時</HeaderCell>
                    <HeaderCell $pad={6}>種類</HeaderCell>
                    <HeaderCell $pad={4}>サイズ</HeaderCell>
                </HeaderRow>
                <FileList>
                    {files.map((file) => (
                        <FileRow key={file.name} $selected={file.selected} $marked={file.marked}>
                            <Svg $s={13}>
                                <path d="M3 1h8l5 5v11H3z" fill="#e6e6e6" />
                                <path d="M11 1v5h5" fill="#bdbdbd" />
                            </Svg>
                            <span>{file.name}</span>
                            <span>{file.date}</span>
                            <span>{file.kind} <KanaPart>ファイル</KanaPart></span>
                            <SizeCell>{file.size}</SizeCell>
                        </FileRow>
                    ))}
                </FileList>
            </Explorer>
        </Page>
    );
};

export default App;
